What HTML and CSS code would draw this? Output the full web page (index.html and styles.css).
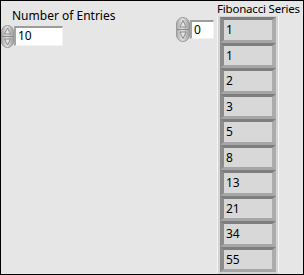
FILE: index.html
```html
<!DOCTYPE html>
<html lang="en">
<head>
  <meta charset="UTF-8">
  <title>Fibonacci</title>
  <link rel="stylesheet" href="styles.css">
</head>
<body>

  <!-- Number of Entries control -->
  <div class="entries">
    <div class="label">Number of Entries</div>
    <div class="numeric">
      <svg class="spinner" width="13" height="23" viewBox="0 0 13 23">
        <defs>
          <linearGradient id="spinGrad" x1="0" y1="0" x2="1" y2="0">
            <stop offset="0" stop-color="#a8a8a8"/>
            <stop offset="0.45" stop-color="#e2e2e2"/>
            <stop offset="1" stop-color="#9c9c9c"/>
          </linearGradient>
        </defs>
        <rect x="0.5" y="0.5" width="12" height="22" rx="6" fill="url(#spinGrad)" stroke="#9a9a9a"/>
        <line x1="1" y1="11.5" x2="12" y2="11.5" stroke="#8c8c8c"/>
        <path d="M6.5 3 L9.5 9 L3.5 9 Z" fill="#e6e6e6" stroke="#7a7a7a" stroke-width="0.8"/>
        <path d="M6.5 20 L9.5 14 L3.5 14 Z" fill="#e6e6e6" stroke="#7a7a7a" stroke-width="0.8"/>
      </svg>
      <div class="num-box wide">10</div>
    </div>
  </div>

  <!-- Fibonacci Series array -->
  <div class="series">
    <div class="label series-label">Fibonacci Series</div>
    <div class="series-row">
      <div class="numeric index">
        <svg class="spinner" width="14" height="25" viewBox="0 0 14 25">
          <defs>
            <linearGradient id="spinGrad2" x1="0" y1="0" x2="1" y2="0">
              <stop offset="0" stop-color="#a8a8a8"/>
              <stop offset="0.45" stop-color="#e2e2e2"/>
              <stop offset="1" stop-color="#9c9c9c"/>
            </linearGradient>
          </defs>
          <rect x="0.5" y="0.5" width="13" height="24" rx="6.5" fill="url(#spinGrad2)" stroke="#9a9a9a"/>
          <line x1="1" y1="12.5" x2="13" y2="12.5" stroke="#8c8c8c"/>
          <path d="M7 3.5 L10 10 L4 10 Z" fill="#e6e6e6" stroke="#7a7a7a" stroke-width="0.8"/>
          <path d="M7 21.5 L10 15 L4 15 Z" fill="#e6e6e6" stroke="#7a7a7a" stroke-width="0.8"/>
        </svg>
        <div class="num-box small">0</div>
      </div>
      <div class="array">
        <div class="cell">1</div>
        <div class="cell">1</div>
        <div class="cell">2</div>
        <div class="cell">3</div>
        <div class="cell">5</div>
        <div class="cell">8</div>
        <div class="cell">13</div>
        <div class="cell">21</div>
        <div class="cell">34</div>
        <div class="cell">55</div>
      </div>
    </div>
  </div>

</body>
</html>
```

FILE: styles.css
```css
html, body {
  margin: 0;
  padding: 0;
}

body {
  width: 304px;
  height: 275px;
  box-sizing: border-box;
  border: 1px solid #000;
  background-color: #e6e6e6;
  font-family: "Noto Sans", "DejaVu Sans", sans-serif;
  font-size: 12px;
  color: #000;
  display: flex;
  overflow: hidden;
}

.label {
  line-height: 14px;
  white-space: nowrap;
}

.entries {
  width: 62px;
  flex-shrink: 0;
  padding-top: 8px;
}

.entries .label {
  padding-left: 11px;
  margin-bottom: 2px;
}

.numeric {
  display: flex;
  align-items: flex-start;
}

.num-box {
  box-sizing: border-box;
  background-color: #fff;
  border-top: 2px solid #9c9c9c;
  border-left: 2px solid #a4a4a4;
  border-right: 1px solid #f2f2f2;
  border-bottom: 1px solid #f2f2f2;
  line-height: 16px;
  padding-left: 2px;
}

.num-box.wide {
  width: 49px;
  height: 20px;
  margin-top: 1px;
}

.num-box.small {
  width: 24px;
  height: 19px;
  margin-top: 3px;
}

.series {
  margin-left: 113px;
  display: flex;
  flex-direction: column;
}

.series-label {
  padding-left: 41px;
  margin-top: 1px;
  font-size: 11.5px;
  letter-spacing: -0.2px;
}

.series-row {
  display: flex;
  align-items: flex-start;
}

.index {
  margin-top: 1px;
}

.array {
  margin-left: 3px;
  width: 62px;
  box-sizing: border-box;
  border-left: 1px solid #f6f6f6;
  border-right: 1px solid #f6f6f6;
  background-color: #d4d4d4;
  padding: 1px 2px 2px 2px;
  display: flex;
  flex-direction: column;
}

.cell {
  box-sizing: border-box;
  width: 56px;
  height: 25.5px;
  border-style: solid;
  border-width: 3px 4px 3px 4px;
  border-top-color: #7e7e7e;
  border-left-color: #8c8c8c;
  border-right-color: #acacac;
  border-bottom-color: #a6a6a6;
  background-color: #d8d8d8;
  padding-left: 2px;
  line-height: 19px;
}
```
